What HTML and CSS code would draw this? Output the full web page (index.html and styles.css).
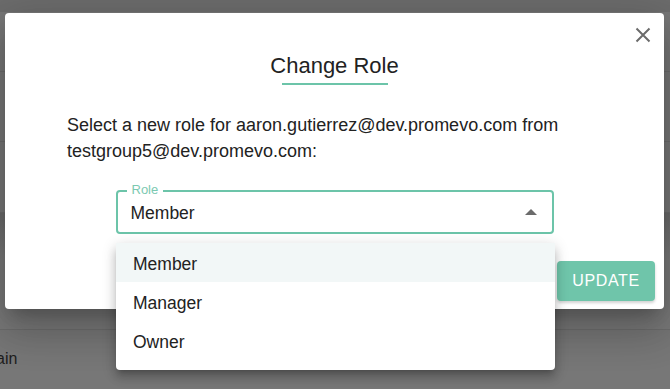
FILE: index.html
```html
<!DOCTYPE html>
<html>
<head>
<meta charset="utf-8">
<link rel="stylesheet" href="styles.css">
</head>
<body>
<div class="page">
  <div class="topbar"></div>
  <div class="row r1"></div>
  <div class="row r2"><span class="cell">E</span></div>
  <div class="row r3"></div>
  <div class="row r4"></div>
  <div class="row r5"><span class="cell">ain</span></div>
</div>

<div class="dialog">
  <button class="close" aria-label="close">
    <svg width="16" height="16" viewBox="0 0 16 16"><path d="M1.5 1.5 L14.5 14.5 M14.5 1.5 L1.5 14.5" stroke="#6b6b6b" stroke-width="2" fill="none"/></svg>
  </button>
  <div class="head">
    <h2 class="title">Change Role</h2>
    <div class="underline"></div>
  </div>
  <p class="text">Select a new role for aaron.gutierrez@dev.promevo.com from testgroup5@dev.promevo.com:</p>
  <div class="field">
    <span class="label">Role</span>
    <span class="value">Member</span>
    <span class="arrow"></span>
  </div>
  <div class="footer">
    <button class="update">UPDATE</button>
  </div>
</div>

<ul class="menu">
  <li class="item active">Member</li>
  <li class="item">Manager</li>
  <li class="item">Owner</li>
</ul>
</body>
</html>
```

FILE: styles.css
```css
html, body {
  margin: 0;
  padding: 0;
}
body {
  width: 670px;
  height: 389px;
  overflow: hidden;
  background: #777777;
  font-family: "Liberation Sans", Arial, sans-serif;
  position: relative;
}
.page {
  display: flex;
  flex-direction: column;
  height: 389px;
}
.topbar {
  height: 12px;
  background: #6c6c6c;
}
.row {
  border-bottom: 1px solid #6d6d6d;
  color: #1e1e1e;
  font-size: 16px;
  display: flex;
  align-items: center;
  box-sizing: border-box;
}
.r1 { height: 60px; }
.r2 { height: 70px; }
.r3 { height: 71px; }
.r4 { height: 117px; background: linear-gradient(#6a6a6a, #7a7a7a 40%); }
.r5 { flex: 1; border-bottom: none; }
.cell { margin-left: -13px; }
.r5 .cell { margin-left: -4px; margin-top: -2px; }

.dialog {
  position: absolute;
  left: 5px;
  top: 13px;
  width: 659px;
  height: 296px;
  background: #ffffff;
  border-radius: 4px;
  box-shadow: 0 11px 15px -7px rgba(0,0,0,0.2), 0 24px 38px 3px rgba(0,0,0,0.14), 0 9px 46px 8px rgba(0,0,0,0.12);
  display: flex;
  flex-direction: column;
  box-sizing: border-box;
}
.close {
  position: absolute;
  right: 13px;
  top: 14px;
  width: 16px;
  height: 16px;
  padding: 0;
  border: none;
  background: none;
  display: flex;
}
.head {
  margin-top: 40px;
  display: flex;
  flex-direction: column;
  align-items: center;
}
.title {
  margin: 0;
  font-size: 22px;
  font-weight: normal;
  line-height: 26px;
  color: #222222;
}
.underline {
  width: 106px;
  height: 2px;
  margin-top: 4px;
  background: #6cc4a9;
}
.text {
  margin: 27px 0 0 62px;
  width: 540px;
  font-size: 18px;
  line-height: 26px;
  color: #222222;
}
.field {
  position: relative;
  align-self: center;
  margin-top: 26px;
  width: 438px;
  height: 44px;
  box-sizing: border-box;
  border: 2px solid #6cc4a9;
  border-radius: 4px;
  display: flex;
  align-items: center;
  padding: 0 13px;
}
.label {
  position: absolute;
  left: 9px;
  top: -9px;
  padding: 0 5px;
  background: #ffffff;
  font-size: 13px;
  line-height: 14px;
  color: #7cc9b1;
}
.value {
  flex: 1;
  font-size: 17.5px;
  color: #222222;
  padding-top: 2px;
}
.arrow {
  width: 0;
  height: 0;
  border-left: 6px solid transparent;
  border-right: 6px solid transparent;
  border-bottom: 6px solid #6b6b6b;
  margin-right: 2px;
}
.footer {
  margin-top: auto;
  display: flex;
  justify-content: flex-end;
  padding: 0 9px 8px 0;
}
.update {
  width: 98px;
  height: 40px;
  border: none;
  border-radius: 4px;
  background: #6fc5aa;
  color: #ffffff;
  font-family: "Liberation Sans", Arial, sans-serif;
  font-size: 16px;
  letter-spacing: 0.6px;
  box-shadow: 0 2px 3px rgba(0,0,0,0.18);
}

.menu {
  position: absolute;
  left: 116px;
  top: 243px;
  width: 439px;
  margin: 0;
  padding: 0 0 10px 0;
  list-style: none;
  background: #ffffff;
  border-radius: 4px;
  box-shadow: 0 5px 5px -3px rgba(0,0,0,0.2), 0 8px 10px 1px rgba(0,0,0,0.14), 0 3px 14px 2px rgba(0,0,0,0.12);
}
.item {
  height: 39px;
  box-sizing: border-box;
  padding-top: 3px;
  display: flex;
  align-items: center;
  padding-left: 17px;
  font-size: 17.5px;
  color: #222222;
}
.item.active {
  background: #f2f7f7;
}
```
